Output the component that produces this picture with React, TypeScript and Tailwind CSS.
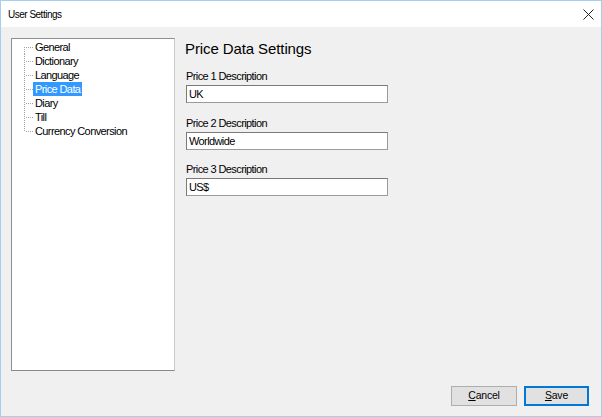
import { useState } from "react";

const items = [
  "General",
  "Dictionary",
  "Language",
  "Price Data",
  "Diary",
  "Till",
  "Currency Conversion",
];

const fields = [
  { label: "Price 1 Description", value: "UK" },
  { label: "Price 2 Description", value: "Worldwide" },
  { label: "Price 3 Description", value: "US$" },
];

// dotted connector drawn for each tree row
const Connector = ({ first, last }: { first: boolean; last: boolean }) => {
  const dots = [];
  const top = first ? 7 : 0;
  const bottom = last ? 8 : 14;
  for (let y = top; y < bottom; y += 2) {
    dots.push(<rect key={"v" + y} x={12} y={y} width={1} height={1} />);
  }
  for (let x = 14; x < 21; x += 2) {
    dots.push(<rect key={"h" + x} x={x} y={7} width={1} height={1} />);
  }
  return (
    <svg width="21" height="14" className="shrink-0 fill-[#a0a0a0]">
      {dots}
    </svg>
  );
};

const App = () => {
  const [selected, setSelected] = useState<string>("Price Data");

  return (
    <div className="w-[602px] h-[417px] border border-[#a9cdef] flex flex-col bg-[#f0f0f0] font-['Liberation_Sans',Arial,sans-serif] text-black">
      <div className="h-[26px] bg-white flex items-center justify-between pl-[7px] pr-[7px]">
        <span className="text-[10px] tracking-[-0.5px]">User Settings</span>
        <svg width="11" height="11" viewBox="0 0 11 11" className="stroke-[#222] mt-[1px]">
          <path d="M0.5 0.5 L10.5 10.5 M10.5 0.5 L0.5 10.5" strokeWidth="1" fill="none" />
        </svg>
      </div>

      <div className="flex-1 flex flex-col px-[10px]">
        <div className="flex mt-[11px] gap-[10px]">
          <div className="w-[164px] h-[333px] bg-white border border-[#8f8f8f] border-r-[#c8c8c8] border-b-[#8a8a8a] pt-[1px]">
            {items.map((item, i) => (
              <div key={item} className="flex h-[14px] items-center">
                <Connector first={i === 0} last={i === items.length - 1} />
                <span
                  onClick={() => setSelected(item)}
                  className={
                    "px-[2px] h-[14px] leading-[14px] text-[11px] tracking-[-0.6px] whitespace-nowrap " +
                    (selected === item ? "bg-[#3399ff] text-white" : "")
                  }
                >
                  {item}
                </span>
              </div>
            ))}
          </div>

          <div className="flex flex-col">
            <h1 className="mt-[1px] h-[20px] leading-[20px] text-[15px] tracking-[-0.1px]">
              Price Data Settings
            </h1>
            {fields.map((field, i) => (
              <div
                key={field.label}
                className={
                  "flex flex-col " +
                  (i === 0 ? "mt-[10px]" : i === 1 ? "mt-[13px]" : "mt-[12px]")
                }
              >
                <label className="ml-[1px] h-[14px] leading-[14px] text-[11px] tracking-[-0.6px]">
                  {field.label}
                </label>
                <input
                  defaultValue={field.value}
                  className="mt-[2px] ml-[1px] w-[202px] h-[18px] px-[2px] bg-white border border-[#7a7a7a] border-r-[#9a9a9a] border-b-[#9a9a9a] text-[11px] tracking-[-0.6px] outline-none"
                />
              </div>
            ))}
          </div>
        </div>

        <div className="flex justify-end gap-[7px] mt-[15px] pr-[2px]">
          <button className="w-[66px] h-[20px] bg-[#e1e1e1] border border-[#adadad] text-[10.5px] tracking-[-0.2px]">
            <span className="underline">C</span>ancel
          </button>
          <button className="w-[65px] h-[20px] bg-[#e1e1e1] border-2 border-[#0078d7] text-[10.5px] tracking-[-0.2px]">
            <span className="underline">S</span>ave
          </button>
        </div>
      </div>
    </div>
  );
};

export default App;
